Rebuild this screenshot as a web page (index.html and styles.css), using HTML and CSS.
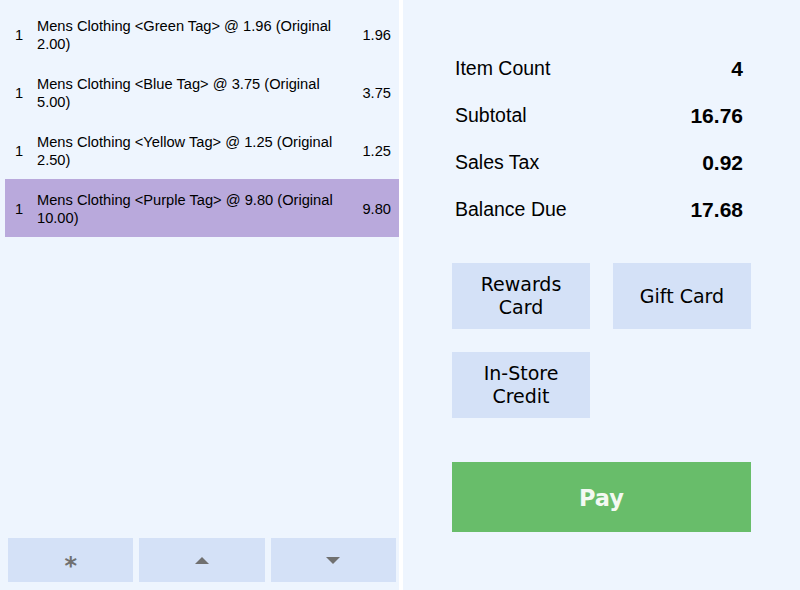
FILE: index.html
```html
<!DOCTYPE html>
<html>
<head>
<meta charset="utf-8">
<link rel="stylesheet" href="styles.css">
</head>
<body>
<div class="app">
  <section class="cart">
    <div class="lines">
      <div class="line">
        <span class="qty">1</span>
        <span class="desc">Mens Clothing &lt;Green Tag&gt; @ 1.96 (Original 2.00)</span>
        <span class="price">1.96</span>
      </div>
      <div class="line">
        <span class="qty">1</span>
        <span class="desc">Mens Clothing &lt;Blue Tag&gt; @ 3.75 (Original 5.00)</span>
        <span class="price">3.75</span>
      </div>
      <div class="line">
        <span class="qty">1</span>
        <span class="desc">Mens Clothing &lt;Yellow Tag&gt; @ 1.25 (Original 2.50)</span>
        <span class="price">1.25</span>
      </div>
      <div class="line selected">
        <span class="qty">1</span>
        <span class="desc">Mens Clothing &lt;Purple Tag&gt; @ 9.80 (Original 10.00)</span>
        <span class="price">9.80</span>
      </div>
    </div>
    <div class="cart-tools">
      <button class="tool"><span class="star">*</span></button>
      <button class="tool"><span class="tri up"></span></button>
      <button class="tool"><span class="tri down"></span></button>
    </div>
  </section>
  <section class="checkout">
    <div class="summary">
      <div class="sum-row"><span>Item Count</span><b>4</b></div>
      <div class="sum-row"><span>Subtotal</span><b>16.76</b></div>
      <div class="sum-row"><span>Sales Tax</span><b>0.92</b></div>
      <div class="sum-row"><span>Balance Due</span><b>17.68</b></div>
    </div>
    <div class="tenders">
      <button class="tender">Rewards<br>Card</button>
      <button class="tender">Gift Card</button>
      <button class="tender">In-Store<br>Credit</button>
    </div>
    <button class="pay">Pay</button>
  </section>
</div>
</body>
</html>
```
FILE: styles.css
```css
html, body {
  margin: 0;
  padding: 0;
  background: #ffffff;
}
.app {
  display: flex;
  width: 800px;
  height: 590px;
  gap: 4px;
}
.cart {
  width: 399px;
  background: #eef5fe;
  display: flex;
  flex-direction: column;
}
.lines {
  flex: 1;
  padding: 5px 0 0 5px;
}
.line {
  display: grid;
  grid-template-columns: 32px 316px 1fr;
  align-items: center;
  height: 58px;
  padding-top: 1px;
  box-sizing: border-box;
  font-family: "Liberation Sans", Arial, sans-serif;
  font-size: 14.67px;
  line-height: 18px;
  color: #000;
}
.line.selected {
  background: #b9a9dc;
}
.qty {
  padding-left: 10px;
}
.desc {
  padding-right: 4px;
}
.price {
  text-align: right;
  padding-right: 8px;
}
.cart-tools {
  display: flex;
  gap: 6px;
  padding: 0 3px 8px 8px;
}
.tool {
  flex: 1;
  height: 44px;
  border: none;
  background: #d4e1f7;
  display: flex;
  align-items: center;
  justify-content: center;
  padding: 0;
}
.star {
  font-family: "DejaVu Sans", Verdana, sans-serif;
  font-weight: bold;
  font-size: 24px;
  color: #707070;
  line-height: 1;
  margin-top: 12px;
}
.tri {
  width: 0;
  height: 0;
  border-left: 7px solid transparent;
  border-right: 7px solid transparent;
}
.tri.up {
  border-bottom: 7px solid #707070;
  margin-top: 0;
}
.tri.down {
  border-top: 7px solid #707070;
  margin-top: 0;
}
.checkout {
  flex: 1;
  background: #eef5fe;
  padding: 45px 49px 0 49px;
  box-sizing: border-box;
  display: flex;
  flex-direction: column;
}
.summary {
  padding: 0 8px 0 3px;
}
.sum-row {
  display: flex;
  justify-content: space-between;
  align-items: center;
  height: 47px;
  font-family: "Liberation Sans", Arial, sans-serif;
  font-size: 19.5px;
  color: #000;
}
.sum-row b {
  font-weight: bold;
  font-size: 21px;
}
.tenders {
  margin-top: 30px;
  display: grid;
  grid-template-columns: 138px 138px;
  column-gap: 23px;
  row-gap: 23px;
}
.tender {
  height: 66px;
  border: none;
  background: #d4e1f7;
  font-family: "DejaVu Sans", Verdana, sans-serif;
  font-size: 19px;
  line-height: 23px;
  color: #000;
  padding: 0;
}
.pay {
  margin-top: 44px;
  height: 70px;
  border: none;
  background: #68bd6a;
  color: #f3f9f3;
  font-family: "DejaVu Sans", Verdana, sans-serif;
  font-weight: bold;
  font-size: 22.5px;
  padding: 2px 0 0 0;
}
```
